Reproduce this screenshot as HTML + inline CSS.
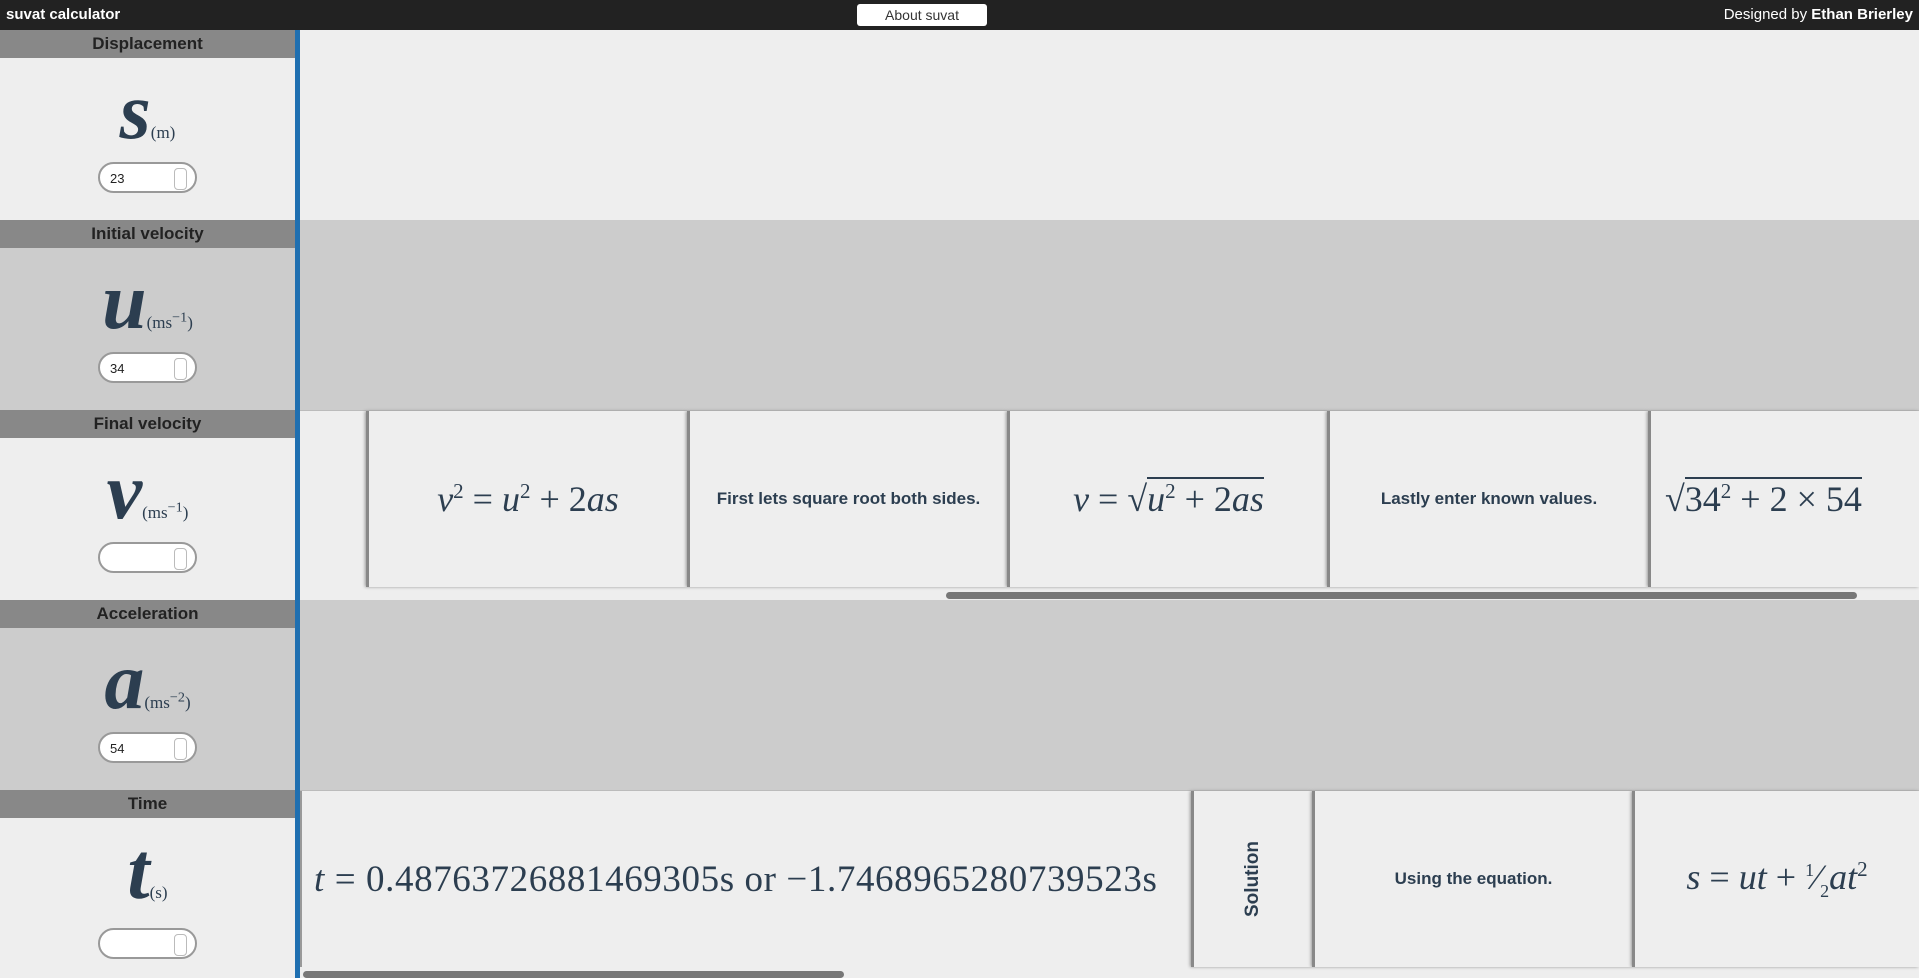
<!DOCTYPE html>
<html><head><meta charset="utf-8"><style>
*{box-sizing:border-box;margin:0;padding:0}
html,body{width:1919px;height:978px;overflow:hidden}
body{background:#eee;font-family:"Liberation Sans",sans-serif;position:relative}
.top{position:absolute;left:0;top:0;width:1919px;height:30px;background:#222;color:#fff}
.top .t{position:absolute;left:6px;top:6px;font-weight:bold;font-size:15px}
.top .about{position:absolute;left:857px;top:4px;width:130px;height:22px;background:#fff;color:#333;border-radius:3px;font-size:14px;text-align:center;line-height:22px}
.top .d{position:absolute;right:6px;top:6px;font-size:15px}
.side{position:absolute;left:0;top:30px;width:295px;height:948px}
.sec{position:absolute;left:0;width:295px;height:190px}
.sec .h{height:28px;background:#888;color:#222;font-weight:bold;font-size:17px;text-align:center;line-height:28px}
.sec .v{position:absolute;left:0;width:295px;top:42px;text-align:center;font-family:"Liberation Serif",serif;font-style:italic;font-weight:bold;color:#2c3e50;font-size:80px;line-height:80px}
.sec .v span{font-style:normal;font-weight:normal;font-size:17px}
.inp{position:absolute;left:98px;top:132px;width:99px;height:31px;border:2px solid #999;border-radius:16px;background:#fff;font-size:13px;padding:7px 0 0 10px;color:#222}
.inp:after{content:"";position:absolute;right:8px;top:4px;width:11px;height:20px;border:1px solid #bbb;border-radius:4px}
.bar{position:absolute;left:295px;top:30px;width:5px;height:948px;background:#1f6fb0}
.row{position:absolute;left:300px;width:1619px;height:190px}
.cell{position:absolute;top:0;height:176px;border-left:3px solid #888;box-shadow:-1px 0 3px #999;background:#eee;display:flex;align-items:center;justify-content:center;color:#2c3e50}
.m{font-family:"Liberation Serif",serif;font-size:36px;white-space:nowrap}
.i{font-style:italic}
.txt{font-weight:bold;font-size:17px;color:#2c3e50}
.sb{position:absolute;height:7px;background:#777;border-radius:4px}
</style></head><body>
<div class="top"><div class="t">suvat calculator</div><div class="about">About suvat</div><div class="d">Designed by <b>Ethan Brierley</b></div></div>
<div class="side">
<div class="sec" style="top:0;background:#eee"><div class="h">Displacement</div><div class="v">s<span>(m)</span></div><div class="inp">23</div></div>
<div class="sec" style="top:190px;background:#ccc"><div class="h">Initial velocity</div><div class="v">u<span>(ms<sup>−1</sup>)</span></div><div class="inp">34</div></div>
<div class="sec" style="top:380px;background:#eee"><div class="h">Final velocity</div><div class="v">v<span>(ms<sup>−1</sup>)</span></div><div class="inp"></div></div>
<div class="sec" style="top:570px;background:#ccc"><div class="h">Acceleration</div><div class="v">a<span>(ms<sup>−2</sup>)</span></div><div class="inp">54</div></div>
<div class="sec" style="top:760px;background:#eee;height:188px"><div class="h">Time</div><div class="v">t<span>(s)</span></div><div class="inp" style="top:138px"></div></div>
</div>
<div class="bar"></div>
<div class="row" style="top:30px;background:#eee"></div>
<div class="row" style="top:220px;background:#ccc"></div>
<div class="row" style="top:410px;background:#eee;border-top:1px solid #bbb">
<div class="cell" style="left:0;width:66px;border-left:none;box-shadow:none"></div>
<div class="cell" style="left:66px;width:321px"><span class="m"><span class="i">v</span><sup style="font-size:21px">2</sup> = <span class="i">u</span><sup style="font-size:21px">2</sup> + 2<span class="i">as</span></span></div>
<div class="cell" style="left:387px;width:320px"><span class="txt">First lets square root both sides.</span></div>
<div class="cell" style="left:707px;width:320px"><span class="m"><span class="i">v</span> = √<span style="border-top:2px solid #2c3e50"><span class="i">u</span><sup style="font-size:21px">2</sup> + 2<span class="i">as</span></span></span></div>
<div class="cell" style="left:1027px;width:321px"><span class="txt">Lastly enter known values.</span></div>
<div class="cell" style="left:1348px;width:271px;justify-content:flex-start;padding-left:14px"><span class="m">√<span style="border-top:2px solid #2c3e50">34<sup style="font-size:21px">2</sup> + 2 × 54</span></span></div>
<div class="sb" style="left:646px;top:181px;width:911px"></div>
</div>
<div class="row" style="top:600px;background:#ccc"></div>
<div class="row" style="top:790px;background:#eee;height:188px;border-top:1px solid #bbb">
<div class="cell" style="left:0;width:891px;border-left:2px solid #999;box-shadow:none;justify-content:flex-start;padding-left:12px"><span class="m" style="font-size:37px;letter-spacing:0.6px"><span class="i">t</span> = 0.48763726881469305s or −1.7468965280739523s</span></div>
<div class="cell" style="left:891px;width:121px"><span class="txt" style="transform:rotate(-90deg);display:inline-block;font-size:19px">Solution</span></div>
<div class="cell" style="left:1012px;width:320px"><span class="txt">Using the equation.</span></div>
<div class="cell" style="left:1332px;width:287px"><span class="m"><span class="i">s</span> = <span class="i">ut</span> + <sup style="font-size:18px">1</sup>⁄<sub style="font-size:18px">2</sub><span class="i">at</span><sup style="font-size:21px">2</sup></span></div>
<div class="sb" style="left:3px;top:180px;width:541px"></div>
</div>
</body></html>
